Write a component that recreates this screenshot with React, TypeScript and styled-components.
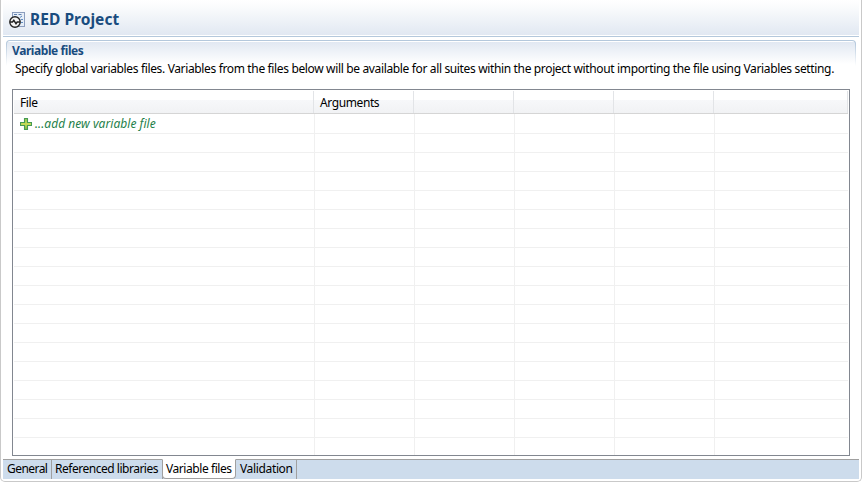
import React from "react";
import styled, { createGlobalStyle, css } from "styled-components";

const GlobalStyle = createGlobalStyle`
  * { box-sizing: border-box; }
  body {
    margin: 0;
    background: #fff;
    color: #000;
    font-family: "Noto Sans", "Open Sans", sans-serif;
    font-size: 12px;
    line-height: 16px;
  }
`;

const Editor = styled.main`
  display: flex;
  flex-direction: column;
  width: 862px;
  height: 482px;
  padding: 0 2px 2px;
  border: 1px solid #c9c9c9;
  border-top: 0;
  border-radius: 0 0 5px 5px;
  background: #fff;
  overflow: hidden;
  white-space: nowrap;
`;

const Header = styled.header`
  display: flex;
  align-items: flex-start;
  flex: none;
  height: 37px;
  padding: 12px 0 0 6px;
  gap: 5px;
  border-bottom: 1px solid #b4c8dc;
  background: linear-gradient(#fff 0, #fbfcfd 6px, #e1e8f2 35px, #fff 35px);
`;

const Title = styled.h1`
  margin: -3px 0 0;
  color: #194c7f;
  font-size: 15.5px;
  line-height: 20px;
  font-weight: 700;
  letter-spacing: 0.04px;
`;

const SectionFrame = styled.div`
  flex: none;
  width: 850px;
  height: 49px;
  margin: 3px 0 0 3px;
  padding: 1px;
  border-radius: 4px 4px 0 0;
  background: linear-gradient(#b4c8dc 0, #b4c8dc 3px, #fff 26px);
`;

const SectionBody = styled.section`
  height: 48px;
  padding: 1px 0 0 5px;
  border-radius: 3px 3px 0 0;
  background: linear-gradient(#fff 0, #fff 1px, #e1e8f2 1px, #fff 23px);
`;

const SectionTitle = styled.h2`
  margin: 0;
  color: #194c7f;
  font-size: 12px;
  line-height: 17px;
  font-weight: 700;
  letter-spacing: -0.42px;
`;

const Description = styled.p`
  margin: 1px 0 0 3px;
  line-height: 18px;
  letter-spacing: -0.353px;
`;

const Table = styled.div`
  flex: none;
  width: 838px;
  height: 367px;
  margin-left: 9px;
  padding: 1px;
  border: 1px solid #828790;
`;

const columns = css`
  display: grid;
  grid-template-columns: 300px repeat(4, 100px) 1fr;
`;

const HeadRow = styled.div`
  ${columns}
  height: 23px;
  border-bottom: 1px solid #d5d5d5;
  background: linear-gradient(#fff 0, #fff 9px, #f7f8fa 9px, #f1f2f4 22px);
`;

const HeadCell = styled.div`
  padding: 4px 0 0 6px;
  border-right: 1px solid #e2e4e7;
  letter-spacing: -0.4px;
`;

const Row = styled.div<{ $size: number; $last?: boolean }>`
  ${columns}
  height: ${(p) => p.$size}px;
  border-bottom: ${(p) => (p.$last ? 0 : 1)}px solid #f0f0f0;
`;

const Cell = styled.div`
  display: flex;
  align-items: center;
  gap: 3px;
  padding-left: 6px;
  box-shadow: 1px 0 0 #f0f0f0;
  &:last-child { box-shadow: none; }
`;

const AddLabel = styled.span`
  color: #1f7f4a;
  font-style: italic;
  letter-spacing: 0.04px;
`;

const TabBar = styled.nav`
  display: flex;
  flex: none;
  height: 20px;
  margin-top: 3px;
  background: #cddcec;
  border-top: 1px solid #a0a0a0;
`;

const Tab = styled.div<{ $width: number; $spacing: number; $active?: boolean }>`
  width: ${(p) => p.$width}px;
  height: 19px;
  padding: 1px 0 0 ${(p) => (p.$width > 100 ? 3 : 4)}px;
  border-right: 1px solid #a0a0a0;
  letter-spacing: ${(p) => p.$spacing}px;
  ${(p) =>
    p.$active &&
    css`
      height: 20px;
      margin: -1px 0 0 -1px;
      padding: 1px 0 0 3px;
      background: #fff;
      border: 1px solid #a0a0a0;
      border-top-color: #fff;
      border-radius: 0 0 4px 4px;
    `}
`;

const ProjectIcon = () => (
  <svg width="16" height="16" viewBox="0 0 16 16">
    <rect x="3.5" y=".5" width="12" height="14" fill="#e6eef8" stroke="#8b9dbd" />
    <path d="M5 2.5h3M9.5 2.5h3" stroke="#5f7fae" fill="none" />
    <path d="M11 5.5l2-1.5M12 7.5h2M12 10.5h2" stroke="#5f8cc0" fill="none" />
    <circle cx="6" cy="10" r="5.2" fill="#f6f6f6" stroke="#222" strokeWidth="1.4" />
    <path d="M1 10h2.5l1.3-1.7L7 11.7 8.2 10H11" fill="none" stroke="#222" strokeWidth="1.4" />
  </svg>
);

const PlusIcon = () => (
  <svg width="12" height="12" viewBox="0 0 12 12">
    <defs>
      <linearGradient id="plus" x1="0" y1="0" x2="0" y2="1">
        <stop offset="0" stopColor="#8fc650" />
        <stop offset=".5" stopColor="#c9dc58" />
        <stop offset="1" stopColor="#78b847" />
      </linearGradient>
    </defs>
    <path d="M4.5.5h3v4h4v3h-4v4h-3v-4h-4v-3h4z" fill="url(#plus)" stroke="#459a55" strokeWidth="1.1" />
  </svg>
);

const blanks = [0, 1, 2, 3, 4];
const emptyRows = Array.from({ length: 17 }, (_, i) => i);

const tabs = [
  { label: "General", width: 49, spacing: -0.55 },
  { label: "Referenced libraries", width: 111, spacing: -0.48 },
  { label: "Variable files", width: 74, spacing: -0.43 },
  { label: "Validation", width: 61, spacing: -0.35 },
];
const activeTab = "Variable files";

export default function App() {
  return (
    <>
      <GlobalStyle />
      <Editor>
        <Header>
          <ProjectIcon />
          <Title>RED Project</Title>
        </Header>
        <SectionFrame>
          <SectionBody>
            <SectionTitle>Variable files</SectionTitle>
            <Description>
              Specify global variables files. Variables from the files below will be available for all
              suites within the project without importing the file using Variables setting.
            </Description>
          </SectionBody>
        </SectionFrame>
        <Table>
          <HeadRow>
            <HeadCell>File</HeadCell>
            <HeadCell>Arguments</HeadCell>
            <HeadCell />
            <HeadCell />
            <HeadCell />
            <HeadCell />
          </HeadRow>
          <Row $size={20}>
            <Cell>
              <PlusIcon />
              <AddLabel>...add new variable file</AddLabel>
            </Cell>
            {blanks.map((b) => (
              <Cell key={b} />
            ))}
          </Row>
          {emptyRows.map((r) => (
            <Row key={r} $size={r === 16 ? 17 : 19} $last={r === 16}>
              <Cell />
              {blanks.map((b) => (
                <Cell key={b} />
              ))}
            </Row>
          ))}
        </Table>
        <TabBar>
          {tabs.map((t) => (
            <Tab key={t.label} $width={t.width} $spacing={t.spacing} $active={t.label === activeTab}>
              {t.label}
            </Tab>
          ))}
        </TabBar>
      </Editor>
    </>
  );
}
